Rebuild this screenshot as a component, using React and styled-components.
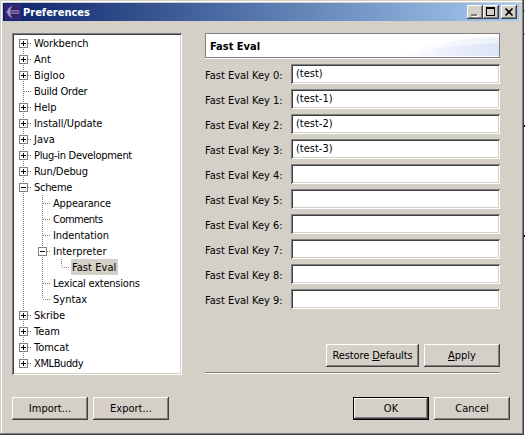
import React from 'react';
import styled, { createGlobalStyle, css } from 'styled-components';

const Global = createGlobalStyle`
  * { box-sizing: border-box; }
  html, body { margin: 0; background: #fff; overflow: hidden; }
  body, button, input {
    font-family: "DejaVu Sans Condensed", "DejaVu Sans", Tahoma, sans-serif;
    font-stretch: condensed;
    font-size: 11px;
    color: #000;
  }
`;

const Desktop = styled.div`
  position: relative;
  width: 527px;
  height: 437px;
  background: #fff;
`;

const Tick = styled.i`
  position: absolute;
  left: 524px;
  top: ${p => p.$y}px;
  width: 1px;
  height: 2px;
  background: ${p => p.$color};
`;

const Window = styled.div`
  display: flex;
  flex-direction: column;
  width: 524px;
  height: 435px;
  background: #d4d0c8;
  padding: 3px 4px 0 3px;
  box-shadow: inset -1px -1px #404040, inset -2px -2px #808080, inset 1px 1px #d4d0c8, inset 2px 2px #fff;
`;

const TitleBar = styled.header`
  display: flex;
  align-items: center;
  height: 18px;
  width: 516px;
  padding-left: 2px;
  background: linear-gradient(90deg, #0a246a, #a6caf0);
`;

const Title = styled.h1`
  margin: 0 auto 0 2px;
  font: bold 11px "DejaVu Sans Condensed", "DejaVu Sans", sans-serif;
  font-stretch: condensed;
  line-height: 18px;
  padding-top: 1px;
  color: #fff;
`;

const raised = css`
  border: 0;
  background: #d4d0c8;
  box-shadow: inset -1px -1px #404040, inset 1px 1px #fff, inset -2px -2px #808080;
`;

const Caption = styled.button`
  ${raised}
  display: block;
  width: 16px;
  height: 14px;
  padding: 0;
  margin-right: ${p => p.$gap || 0}px;
  svg { display: block; }
`;

const Main = styled.main`
  display: flex;
  align-items: flex-start;
  padding: 12px 0 0 9px;
  height: 363px;
`;

const Tree = styled.ul`
  list-style: none;
  margin: 0;
  padding: 2px 0 0 7px;
  width: 170px;
  height: 342px;
  background: #fff;
  box-shadow: inset 1px 1px #808080, inset -1px -1px #fff, inset 2px 2px #404040, inset -2px -2px #d4d0c8;
`;

const Node = styled.li`
  display: flex;
  height: 16px;
  svg { display: block; flex: none; }
`;

const NodeLabel = styled.span`
  height: 16px;
  padding: 0 2px 0 1px;
  line-height: 18px;
  white-space: nowrap;
  letter-spacing: ${p => p.$ls || 0}px;
  background: ${p => (p.$selected ? '#d4d0c8' : 'transparent')};
`;

const Page = styled.section`
  width: 295px;
  margin-left: 23px;
`;

const PageHeader = styled.div`
  display: flex;
  justify-content: space-between;
  height: 25px;
  width: 295px;
  background: #fff;
  border: 1px solid #808080;
  box-shadow: 0 1px #fff;
`;

const PageTitle = styled.h2`
  margin: 0 0 0 4px;
  font: bold 11px "DejaVu Sans Condensed", "DejaVu Sans", sans-serif;
  font-stretch: condensed;
  line-height: 25px;
`;

const Fields = styled.div`
  display: grid;
  gap: 5px;
  margin-top: 6px;
`;

const Field = styled.label`
  display: flex;
  height: 20px;
  line-height: 24px;
  white-space: nowrap;
`;

const FieldName = styled.span`
  width: 86px;
  flex: none;
`;

const Input = styled.input`
  width: 209px;
  height: 20px;
  padding: 0 5px 1px;
  border: 0;
  border-radius: 0;
  outline: 0;
  background: #fff;
  box-shadow: inset 1px 1px #808080, inset -1px -1px #fff, inset 2px 2px #404040, inset -2px -2px #d4d0c8;
`;

const Actions = styled.div`
  display: flex;
  justify-content: flex-end;
  gap: 5px;
  margin-top: 35px;
`;

const Button = styled.button`
  ${raised}
  width: ${p => (p.$wide ? 93 : 76)}px;
  height: 23px;
  padding: 0 0 1px;
  letter-spacing: ${p => (p.$wide ? -0.12 : 0)}px;
  white-space: nowrap;
  ${p => p.$primary && css`
    padding: 0;
    box-shadow: inset 0 0 0 1px #000, inset -2px -2px #404040, inset 2px 2px #fff, inset -3px -3px #808080;
  `}
`;

const Separator = styled.hr`
  margin: 5px 0 0;
  border: 0;
  height: 2px;
  background: linear-gradient(#808080 50%, #fff 50%);
`;

const Footer = styled.footer`
  display: flex;
  gap: 5px;
  padding: 13px 0 0 9px;
`;

const Spacer = styled.div`
  width: 174px;
`;

const EclipseIcon = () => (
  <svg width="16" height="16" viewBox="0 0 16 16">
    <rect width="16" height="16" fill="#35267a" />
    <circle cx="9.5" cy="8" r="5.5" fill="#30205f" />
    <path d="M7 2.5Q2.5 4 2.5 8T7 13.5Q4.8 11 4.8 8T7 2.5" fill="#b5a8dc" stroke="#8878bd" strokeWidth=".6" />
    <path d="M4 6.5H14M4 9.5H14" stroke="#8374ba" />
    <path d="M1 8H15" stroke="#a79bd2" strokeWidth=".8" />
  </svg>
);

// guide columns: v = line through, t = tee, l = corner, + / - = toggle, space = blank
const Guides = ({ pattern, first, last }) => {
  const w = pattern.length * 19 - 5;
  return (
    <svg width={w} height="16" shapeRendering="crispEdges">
      {[...pattern].map((c, i) => {
        const x = i * 19 + 4.5;
        const toggle = c === '+' || c === '-';
        if (c === ' ') return null;
        const y1 = first && i === 0 ? 8 : 0;
        const y2 = c === 'l' || (last && i === 0) ? 8 : 16;
        return (
          <g key={i} stroke="#808080" fill="none">
            <path d={`M${x} ${y1}V${y2}`} strokeDasharray="1 1" />
            {c !== 'v' && <path d={`M${i * 19 + 5} 8.5H${i * 19 + 13}`} strokeDasharray="1 1" />}
            {toggle && <rect x={x - 4} y="4.5" width="8" height="8" fill="#fff" />}
            {toggle && <path d={`M${x - 2.5} 8.5h5` + (c === '+' ? `M${x} 6v5` : '')} stroke="#000" />}
          </g>
        );
      })}
    </svg>
  );
};

const nodes = [
  ['+', 'Workbench', -0.1], ['+', 'Ant', 0], ['+', 'Bigloo', 0], ['t', 'Build Order', -0.25],
  ['+', 'Help', 0], ['+', 'Install/Update', -0.05], ['+', 'Java', 0], ['+', 'Plug-in Development', -0.3],
  ['+', 'Run/Debug', -0.1], ['-', 'Scheme', -0.3], ['vt', 'Appearance', -0.15], ['vt', 'Comments', -0.5],
  ['vt', 'Indentation', -0.08], ['v-', 'Interpreter', 0], ['vvl', 'Fast Eval', 0.05],
  ['vt', 'Lexical extensions', -0.22], ['vl', 'Syntax', 0], ['+', 'Skribe', 0], ['+', 'Team', 0],
  ['+', 'Tomcat', 0], ['+', 'XMLBuddy', -0.4],
];

const values = ['(test)', '(test-1)', '(test-2)', '(test-3)', '', '', '', '', '', ''];

export default function App() {
  return (
    <Desktop>
      <Global />
      <Window>
        <TitleBar>
          <EclipseIcon />
          <Title>Preferences</Title>
          <Caption><svg width="16" height="14" shapeRendering="crispEdges"><path d="M5 10h6v2H5z" fill="#fff" /><path d="M4 9h6v2H4z" fill="#808080" /></svg></Caption>
          <Caption $gap={2}><svg width="16" height="14" shapeRendering="crispEdges"><path d="M3 2h9v9H3zM4 4v6h7V4z" fillRule="evenodd" /></svg></Caption>
          <Caption $gap={2}><svg width="16" height="14"><path d="M4.5 3.5l7 7M11.5 3.5l-7 7" stroke="#000" strokeWidth="1.7" /></svg></Caption>
        </TitleBar>
        <Main>
          <Tree>
            {nodes.map(([pattern, label, ls], i) => (
              <Node key={label}>
                <Guides pattern={pattern} first={i === 0} last={i === nodes.length - 1} />
                <NodeLabel $ls={ls} $selected={label === 'Fast Eval'}>{label}</NodeLabel>
              </Node>
            ))}
          </Tree>
          <Page>
            <PageHeader>
              <PageTitle>Fast Eval</PageTitle>
              <svg width="100" height="22">
                <defs>
                  <linearGradient id="sweep"><stop offset="0" stopColor="#fff" /><stop offset="1" stopColor="#dbe3f7" /></linearGradient>
                </defs>
                <path d="M0 22Q50 3 100 3V22Z" fill="url(#sweep)" opacity=".5" />
                <path d="M0 22Q50 10 100 9V22Z" fill="url(#sweep)" />
              </svg>
            </PageHeader>
            <Fields>
              {values.map((v, i) => (
                <Field key={i}>
                  <FieldName>{`Fast Eval Key ${i}:`}</FieldName>
                  <Input defaultValue={v} />
                </Field>
              ))}
            </Fields>
            <Actions>
              <Button $wide>Restore <u>D</u>efaults</Button>
              <Button><u>A</u>pply</Button>
            </Actions>
            <Separator />
          </Page>
        </Main>
        <Footer>
          <Button>Import...</Button>
          <Button>Export...</Button>
          <Spacer />
          <Button $primary>OK</Button>
          <Button>Cancel</Button>
        </Footer>
      </Window>
      <Tick $y={10} $color="#b0b0b0" />
      <Tick $y={33} $color="#b0b0b0" />
      <Tick $y={125} $color="#000" />
      <Tick $y={235} $color="#000" />
    </Desktop>
  );
}
